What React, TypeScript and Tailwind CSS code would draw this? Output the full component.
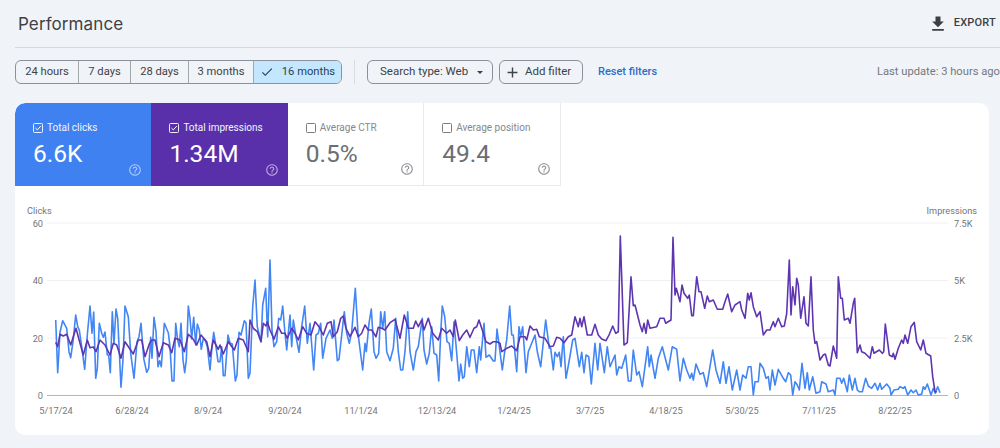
const seg = (ox: number, oy: number, pts: number[][]) => pts.map(([x, y]) => [ox + x / 3, oy + y / 3]);

const blue = [
  ...seg(0, 200, [[167,360],[173,518],[180,397],[188,362],[200,385],[207,455],[212,473],[219,425],[227,345],[233,380],[238,390],[245,440],[254,508],[262,405],[270,318],[276,400],[281,336],[287,535],[292,505],[298,370],[305,400],[310,412],[315,396],[322,465],[326,466],[331,518],[337,335],[342,430],[348,327],[353,355],[363,562],[369,480],[375,318],[385,350],[392,460],[402,535],[411,425],[417,410],[423,370],[431,475],[440,517],[446,505],[452,412],[456,475],[462,352],[468,395],[474,500],[479,482],[484,500],[493,370],[505,398],[510,440],[516,543],[522,543],[527,370],[533,420],[538,440],[543,370],[549,480],[554,518],[559,480],[565,318],[570,355],[575,417],[581,352],[587,435],[592,372],[598,390],[604,448],[610,415],[616,422],[622,440],[630,510],[636,440],[641,397],[648,440],[654,485],[660,485],[665,440],[670,527],[675,527],[684,405],[690,430],[697,432],[706,543],[711,525],[717,397],[723,405],[733,362],[738,368],[745,535]]),
  ...seg(250, 220, [[0,460],[8,260],[15,180],[22,320],[33,365],[38,255],[47,205],[53,350],[60,120],[66,330],[72,380],[80,365],[86,295],[92,300],[98,258],[104,330],[110,390],[120,285],[125,380],[130,300],[137,345],[147,397],[155,320],[164,258],[172,370],[180,310],[191,450],[198,345],[205,340],[212,310],[218,415],[228,355],[240,330],[247,355],[252,300],[262,422],[267,418],[275,345],[283,275],[290,340],[298,370],[305,335],[316,205],[324,340],[338,450],[345,370],[349,395],[357,310],[364,267],[372,395],[378,415],[386,400],[392,275],[398,325],[404,275],[410,395],[420,422],[430,385],[437,295],[445,395],[452,450],[458,450],[465,395],[473,275],[480,395],[490,450],[498,395],[505,380],[517,295],[522,390],[530,432],[538,400],[545,320],[552,400],[560,405],[566,483],[572,340],[577,258],[584,290],[591,365],[598,370],[605,422],[612,305],[620,400],[627,483],[632,432],[638,475],[643,470],[650,380],[658,440],[664,390],[672,390],[680,458],[688,380],[692,420],[702,310],[708,412],[718,405],[730,423],[735,423],[741,327],[748,380]]),
  ...seg(500, 220, [[7,450],[14,395],[20,360],[29,258],[35,345],[40,345],[50,455],[57,320],[62,350],[68,320],[78,458],[85,395],[105,345],[112,395],[122,440],[137,300],[148,385],[152,385],[160,450],[165,397],[172,410],[178,397],[183,440],[190,350],[198,475],[208,420],[218,360],[225,355],[238,440],[245,397],[252,458],[258,405],[266,410],[274,492],[285,370],[293,450],[300,370],[313,458],[322,380],[330,440],[345,405],[350,465],[357,440],[365,445],[377,405],[385,483],[393,483],[400,390],[410,465],[417,455],[427,500],[443,380],[448,440],[453,405],[465,475],[475,415],[487,380],[505,450],[517,380],[530,388],[540,483],[550,415],[560,450],[570,475],[575,460],[580,480],[588,432],[600,463],[610,458],[620,500],[638,390],[648,450],[660,490],[670,425],[678,490],[687,440],[697,510],[710,450]]),
  ...seg(740, 200, [[0,570],[8,525],[18,535],[25,500],[33,500],[40,585],[45,545],[55,545],[60,490],[70,505],[78,535],[85,530],[90,570],[97,510],[105,555],[115,508],[130,535],[137,545],[145,518],[152,525],[158,585],[165,545],[172,555],[178,570],[186,490],[195,565],[202,518],[208,570],[218,530],[228,580],[240,575],[245,545],[258,552],[265,575],[280,570],[285,585],[290,535],[300,535],[305,550],[311,535],[322,575],[328,525],[337,570],[345,535],[352,570],[358,575],[367,575],[377,535],[385,558],[395,565],[405,550],[413,570],[420,550],[425,568],[440,552],[450,565],[453,585],[462,570],[475,568],[480,560],[490,565],[495,560],[503,585],[513,570],[520,578],[528,570],[535,585],[545,582],[550,560],[555,568],[562,552],[573,585],[580,565],[586,580],[593,560],[600,578]]),
];

const purple = [
  ...seg(0, 200, [[167,427],[173,440],[180,403],[190,408],[200,403],[212,435],[228,385],[240,430],[250,465],[262,420],[270,443],[280,441],[288,455],[300,420],[315,435],[330,465],[340,430],[350,435],[363,475],[375,425],[400,462],[415,420],[425,420],[435,470],[448,432],[455,420],[465,420],[477,470],[490,428],[505,435],[515,458],[525,415],[540,420],[553,455],[565,403],[580,418],[590,435],[603,405],[620,425],[630,470],[640,420],[655,448],[660,435],[670,462],[685,425],[703,450],[715,415],[730,420],[745,455]]),
  ...seg(250, 220, [[0,300],[10,325],[22,335],[33,365],[40,310],[48,318],[52,305],[60,330],[72,358],[85,320],[95,340],[105,340],[112,355],[125,325],[135,340],[145,360],[158,320],[170,340],[183,345],[195,305],[207,320],[220,345],[232,310],[243,305],[250,350],[262,335],[272,295],[280,288],[288,325],[300,350],[315,322],[325,350],[335,340],[345,315],[355,330],[365,330],[378,350],[385,322],[395,325],[405,330],[420,308],[435,298],[450,355],[463,285],[475,325],[490,325],[497,303],[505,320],[515,300],[522,330],[535,295],[548,340],[565,360],[575,325],[590,340],[600,330],[610,350],[616,300],[628,362],[638,345],[650,330],[660,352],[672,325],[680,320],[687,300],[695,325],[708,365],[720,372],[730,365],[740,365],[750,370]]),
  ...seg(500, 220, [[5,395],[20,385],[35,378],[50,392],[60,350],[75,350],[80,360],[90,318],[100,330],[110,328],[118,350],[135,355],[150,380],[160,378],[170,352],[180,355],[192,368],[205,350],[215,345],[225,290],[235,320],[240,295],[245,320],[252,290],[262,345],[275,345],[285,313],[295,345],[305,357],[318,362],[327,345],[338,318],[347,340],[355,335],[361,48],[372,375],[382,368],[393,170],[400,257],[405,255],[420,315],[427,335],[432,310],[438,340],[443,300],[450,325],[470,320],[480,295],[492,295],[497,310],[513,300],[519,52],[525,225],[529,205],[540,245],[546,195],[552,220],[563,235],[568,225],[575,287],[580,287],[590,170],[597,215],[603,215],[614,265],[622,228],[628,245],[640,240],[652,268],[668,268],[675,245],[683,222],[695,275],[705,255]]),
  ...seg(740, 200, [[0,305],[5,330],[15,355],[23,280],[28,300],[33,278],[40,320],[50,350],[60,335],[70,405],[80,390],[90,390],[100,365],[105,380],[115,355],[125,380],[133,378],[140,340],[148,180],[153,345],[158,260],[165,315],[170,235],[175,255],[182,355],[192,290],[198,370],[205,378],[213,230],[220,390],[225,430],[230,425],[240,480],[250,465],[256,462],[265,495],[270,498],[280,438],[290,475],[295,230],[302,295],[307,295],[313,360],[325,355],[330,370],[340,310],[344,295],[352,458],[360,435],[365,455],[375,460],[390,475],[397,440],[402,460],[418,450],[427,460],[431,455],[436,372],[448,465],[457,470],[460,460],[465,478],[475,445],[485,420],[490,430],[495,405],[503,430],[513,380],[523,367],[530,425],[542,450],[550,420],[558,460],[572,468],[578,530],[585,575],[590,575]]),
];

const toPoints = (p: number[][]) => p.map(([x, y]) => `${x.toFixed(1)},${y.toFixed(1)}`).join(" ");

function Help({ className }: { className: string }) {
  return (
    <svg viewBox="0 0 24 24" className={className} fill="currentColor">
      <path d="M11 18h2v-2h-2v2zm1-16C6.48 2 2 6.48 2 12s4.48 10 10 10 10-4.48 10-10S17.52 2 12 2zm0 18c-4.41 0-8-3.59-8-8s3.59-8 8-8 8 3.59 8 8-3.59 8-8 8zm0-14c-2.21 0-4 1.79-4 4h2c0-1.1.9-2 2-2s2 .9 2 2c0 2-3 1.75-3 5h2c0-2.25 3-2.5 3-5 0-2.21-1.79-4-4-4z" />
    </svg>
  );
}

function Metric({ label, value, checked, tone }: { label: string; value: string; checked: boolean; tone: "blue" | "purple" | "plain" }) {
  const box = tone === "blue" ? "bg-[#4081f2] text-white" : tone === "purple" ? "bg-[#5a30aa] text-white" : "bg-white text-[#6b6e72] border-r border-b border-[#e8eaed]";
  const helpColor = tone === "blue" ? "text-[#a9c8f8]" : tone === "purple" ? "text-[#b9a3e0]" : "text-[#8f9296]";
  return (
    <div className={`relative w-[136.4px] h-[83px] pl-[18px] pt-[18px] ${box} ${tone === "blue" ? "rounded-tl-[10px]" : ""}`}>
      <div className="flex items-center gap-[4px] text-[10px] leading-[14px]">
        <svg viewBox="0 0 10 10" className="w-[10px] h-[10px]" fill="none" stroke="currentColor">
          <rect x="0.5" y="0.5" width="9" height="9" rx="1" strokeWidth="0.9" />
          {checked && <path d="M2.4 5 L4.3 6.9 L7.8 3.1" strokeWidth="1" />}
        </svg>
        <span className={checked ? "text-[#f1f4fc]" : "text-[#85888c]"}>{label}</span>
      </div>
      <div className="mt-[5px] text-[24.5px] leading-[28px]">{value}</div>
      <Help className={`absolute right-[9px] bottom-[9px] w-[14px] h-[14px] ${helpColor}`} />
    </div>
  );
}

const chips = [
  { t: "24 hours", w: "w-[63px]" },
  { t: "7 days", w: "w-[52px]" },
  { t: "28 days", w: "w-[58px]" },
  { t: "3 months", w: "w-[65px]" },
];

const leftTicks = [["60", 223], ["40", 280.5], ["20", 338], ["0", 395.5]] as const;
const rightTicks = [["7.5K", 223], ["5K", 280.5], ["2.5K", 338], ["0", 395.5]] as const;
const dates = [["5/17/24", 56], ["6/28/24", 132], ["8/9/24", 208], ["9/20/24", 285], ["11/1/24", 361], ["12/13/24", 437], ["1/24/25", 514], ["3/7/25", 590], ["4/18/25", 666], ["5/30/25", 742], ["7/11/25", 819], ["8/22/25", 895]] as const;

export default function App() {
  return (
    <div className="w-[1000px] h-[448px] overflow-hidden bg-[#f0f4f9] font-['Roboto',sans-serif] text-[#3c4043]">
      <div className="ml-[15px] h-[48px] border-b border-[#d5d8dc] flex items-center">
        <h1 className="pl-[3px] pt-[2px] text-[17px] font-normal text-[#3f4144] tracking-[0.1px] font-['Inter',sans-serif]">Performance</h1>
        <div className="ml-auto flex items-center mr-[4px] gap-[6px]">
          <svg viewBox="0 0 24 24" className="w-[20px] h-[20px] text-[#3c4043]" fill="currentColor">
            <path d="M19 9h-4V3H9v6H5l7 7 7-7zM5 18v2h14v-2H5z" />
          </svg>
          <span className="text-[11px] font-medium tracking-[0.2px]">EXPORT</span>
        </div>
      </div>

      <div className="ml-[15px] mt-[12px] h-[24px] flex items-center text-[11.5px] text-[#3f4246]">
        <div className="flex h-[24px] rounded-[6px] border border-[#8b9196] overflow-hidden text-[11.2px]">
          {chips.map((c) => (
            <div key={c.t} className={`${c.w} flex items-center justify-center border-r-[1.5px] border-[#a3a8ad]`}>{c.t}</div>
          ))}
          <div className="w-[87px] flex items-center justify-center gap-[8px] bg-[#c2e7ff] text-[#2d3f52]">
            <svg viewBox="0 0 24 24" className="w-[14px] h-[14px]" fill="currentColor">
              <path d="M9 16.17L4.83 12l-1.42 1.41L9 19 21 7l-1.41-1.41z" />
            </svg>
            16 months
          </div>
        </div>
        <div className="w-px h-[24px] bg-[#dadce0] ml-[12px]" />
        <div className="ml-[12px] w-[126px] h-[24px] rounded-[6px] border border-[#8b9196] flex items-center pl-[12px] gap-[9px]">
          Search type: Web
          <span className="w-0 h-0 border-l-[3.5px] border-r-[3.5px] border-t-[3.5px] border-l-transparent border-r-transparent border-t-[#3c4043]" />
        </div>
        <div className="ml-[6px] w-[84px] h-[24px] rounded-[6px] border border-[#8b9196] flex items-center pl-[4px] gap-[4px]">
          <svg viewBox="0 0 24 24" className="w-[17px] h-[17px]" fill="currentColor">
            <path d="M19 13h-6v6h-2v-6H5v-2h6V5h2v6h6v2z" />
          </svg>
          Add filter
        </div>
        <span className="ml-[15px] text-[#2f6cc4] font-medium text-[11px]">Reset filters</span>
        <span className="ml-auto whitespace-nowrap text-[#75787c] text-[11.2px]">Last update: 3 hours ago</span>
      </div>

      <div className="ml-[15px] mt-[19px] w-[974px] h-[332px] bg-white rounded-[10px] overflow-hidden">
        <div className="flex">
          <Metric label="Total clicks" value="6.6K" checked tone="blue" />
          <Metric label="Total impressions" value="1.34M" checked tone="purple" />
          <Metric label="Average CTR" value="0.5%" checked={false} tone="plain" />
          <Metric label="Average position" value="49.4" checked={false} tone="plain" />
        </div>
        <svg viewBox="15 186 974 249" className="block w-[974px] h-[249px]" fontFamily="Roboto, sans-serif" fontSize="9.2" fill="#73767a">
          {[223, 280.5, 338].map((y) => (
            <line key={y} x1="47" x2="948" y1={y} y2={y} stroke="#eef0f2" strokeWidth="1" />
          ))}
          <line x1="47" x2="948" y1="395.5" y2="395.5" stroke="#b4b7ba" strokeWidth="1" />
          <text x="27" y="214">Clicks</text>
          <text x="977" y="214" textAnchor="end">Impressions</text>
          {leftTicks.map(([t, y]) => (
            <text key={t} x="43" y={y + 3.5} textAnchor="end">{t}</text>
          ))}
          {rightTicks.map(([t, y]) => (
            <text key={t} x="954" y={y + 3.5}>{t}</text>
          ))}
          {dates.map(([t, x]) => (
            <text key={t} x={x} y="414" textAnchor="middle">{t}</text>
          ))}
          <polyline points={toPoints(blue)} fill="none" stroke="#4285f4" strokeWidth="1.6" strokeLinejoin="round" />
          <polyline points={toPoints(purple)} fill="none" stroke="#5e35b1" strokeWidth="1.6" strokeLinejoin="round" />
        </svg>
      </div>
    </div>
  );
}
